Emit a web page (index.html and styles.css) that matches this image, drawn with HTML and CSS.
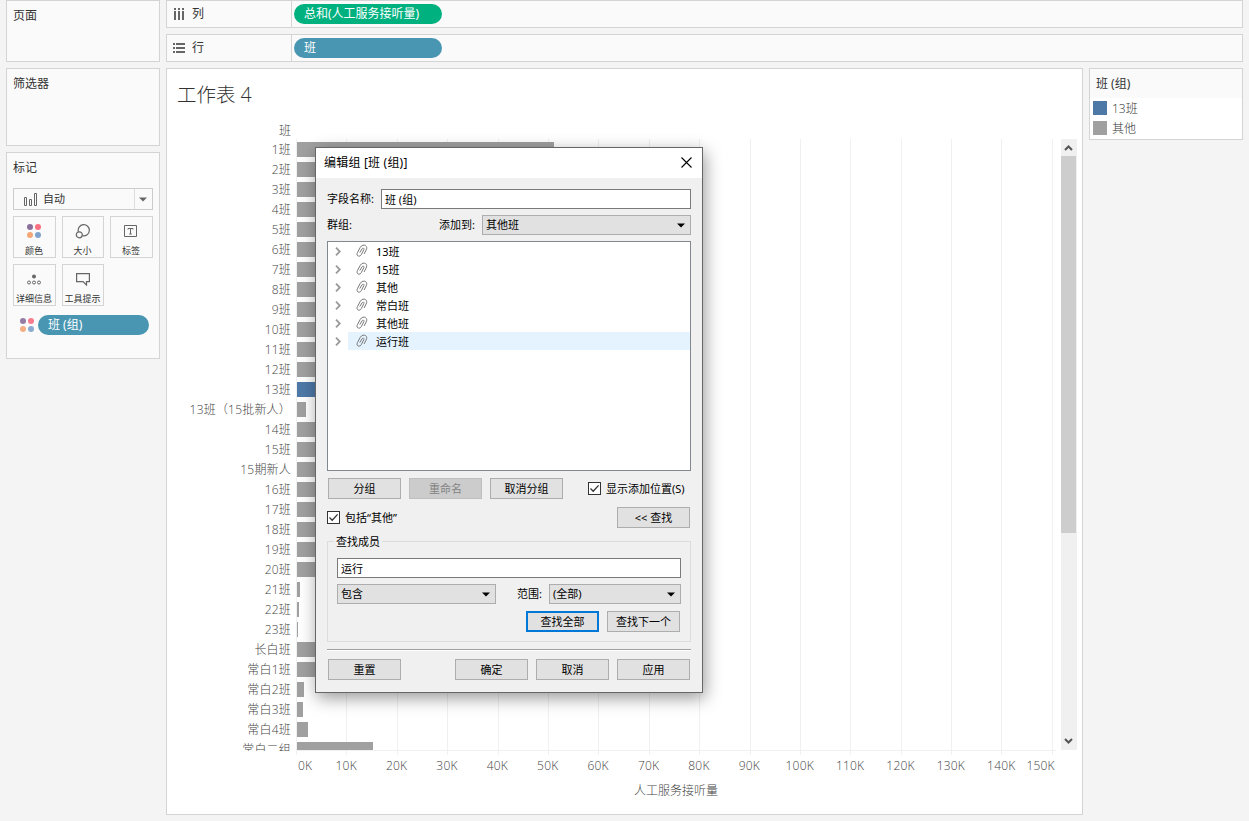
FILE: index.html
```html
<!DOCTYPE html>
<html lang="zh-CN">
<head>
<meta charset="UTF-8" />
<meta name="viewport" content="width=device-width, initial-scale=1" />
<title>工作表 4</title>
<link rel="stylesheet" href="styles.css">
</head>
<body>

<svg class="defs" width="0" height="0">
  <symbol id="clip" viewBox="0 0 12 14">
    <path d="M4 8.200 6.200 4.600c.7-1 2.200-.4 1.700.9L5.300 10.600c-.9 1.900-3.200 2-4 .7-.5-.9-.2-2 .3-3L4.300 3.300C5.600 1 8.200.6 9.700 1.700c1.400 1 1.200 2.800.5 4.200L8.300 9.600" fill="none" stroke="#777" stroke-linecap="round"/>
  </symbol>
  <symbol id="arrow" viewBox="0 0 8 5"><path d="M0 .5h8L4 4.500z"/></symbol>
  <symbol id="chevron" viewBox="0 0 6 9"><path d="M1 .7 4.800 4.500 1 8.300" fill="none" stroke="#999" stroke-width="1.800"/></symbol>
  <symbol id="check" viewBox="0 0 11 11"><path d="M1.500 5.500 4.200 8.200 9.600 2.400" fill="none" stroke="#333" stroke-width="1.300"/></symbol>
  <symbol id="dots" viewBox="0 0 14 14">
    <circle cx="3" cy="3" r="3" fill="#8a6f9b"/><circle cx="11" cy="3" r="3" fill="#fb6f81"/>
    <circle cx="3" cy="11" r="3" fill="#f5a777"/><circle cx="11" cy="11" r="3" fill="#80a3cd"/>
  </symbol>
</svg>

<div class="workspace">
  <div class="sidebar">
    <div class="card pages">页面</div>
    <div class="card filters">筛选器</div>
    <div class="card marks">
      <div class="marks-title">标记</div>
      <div class="mark-type">
        <svg class="bars-icon" width="14" height="13" viewBox="0 0 14 13" fill="none" stroke="#666"><path d="M.5 4.500h2v8h-2zM5.500 6.500h2v6h-2zM10.500.5h2v12h-2z"/></svg>
        <span>自动</span>
        <div class="mark-arrow"><svg width="8" height="5" fill="#666"><use href="#arrow"/></svg></div>
      </div>
      <div class="mark-buttons">
        <div class="mark-btn"><svg width="14" height="14"><use href="#dots"/></svg>颜色</div>
        <div class="mark-btn"><svg width="16" height="16" viewBox="0 0 16 16" fill="none" stroke="#666" stroke-width="1.200"><path d="M3.400 7.800A5.600 5.600 0 1 1 7.500 11.700"/><circle cx="4.300" cy="10.800" r="3"/></svg>大小</div>
        <div class="mark-btn"><svg width="14" height="14" viewBox="0 0 14 14" fill="none" stroke="#666"><path d="M.5 1.500h12v11H.5zM4 5.500V4.500h5v1M6.500 4.500v5.500M5.200 10h2.600"/></svg>标签</div>
        <div class="mark-btn"><svg width="14" height="14" viewBox="0 0 14 14" fill="none" stroke="#666"><circle cx="7" cy="4.500" r="2" fill="#666" stroke="none"/><circle cx="2" cy="10.500" r="1.500"/><circle cx="7" cy="10.500" r="1.500"/><circle cx="12" cy="10.500" r="1.500"/></svg>详细信息</div>
        <div class="mark-btn"><svg width="14" height="14" viewBox="0 0 14 14" fill="none" stroke="#666" stroke-width="1.200"><path d="M.6 1.600h12.800v8H10.500v3.400L7 9.600H.6z"/></svg>工具提示</div>
      </div>
      <div class="mark-field">
        <svg width="14" height="14" opacity=".9"><use href="#dots"/></svg>
        <div class="pill">班 (组)</div>
      </div>
    </div>
  </div>

  <div class="main">
    <div class="shelf">
      <div class="shelf-label">
        <svg width="12" height="12" viewBox="0 0 12 12" fill="#666"><path d="M1 0h2v2H1zM5 0h2v2H5zM9 0h2v2H9zM1 3h2v9H1zM5 3h2v9H5zM9 3h2v9H9z"/></svg>列
      </div>
      <div class="pill green">总和(人工服务接听量)</div>
    </div>
    <div class="shelf">
      <div class="shelf-label">
        <svg width="12" height="12" viewBox="0 0 12 12" fill="#666"><path d="M0 1h2v2H0zM0 5h2v2H0zM0 9h2v2H0zM3 1h9v2H3zM3 5h9v2H3zM3 9h9v2H3z"/></svg>行
      </div>
      <div class="pill">班</div>
    </div>

    <div class="content">
      <div class="sheet">
        <div class="sheet-title">工作表 4</div>
        <div class="row-header">班</div>
        <div class="chart">
          <div class="labels" id="labels"></div>
          <div class="plot">
            <div class="gridlines" id="gridlines"></div>
            <div class="bars" id="bars"></div>
          </div>
          <div class="scrollbar">
            <svg width="9" height="6" viewBox="0 0 9 6" fill="none" stroke="#555" stroke-width="2"><path d="M1 5 4.500 1.500 8 5"/></svg>
            <div class="thumb"></div>
            <svg width="9" height="6" viewBox="0 0 9 6" fill="none" stroke="#555" stroke-width="2"><path d="M1 1 4.500 4.500 8 1"/></svg>
          </div>
        </div>
        <div class="axis" id="axis"></div>
        <div class="axis-title">人工服务接听量</div>
      </div>

      <div class="legend">
        <div class="legend-title">班 (组)</div>
        <div class="legend-item"><i class="swatch blue"></i><span>13班</span></div>
        <div class="legend-item"><i class="swatch"></i><span>其他</span></div>
      </div>
    </div>
  </div>
</div>

<div class="dialog" role="dialog">
  <div class="dialog-title">
    <span>编辑组 [班 (组)]</span>
    <svg width="11" height="11" viewBox="0 0 11 11" stroke="#000" stroke-width="1.100"><path d="M.5.5l10 10M10.500.5l-10 10"/></svg>
  </div>
  <div class="dialog-body">
    <div class="field-row">
      <label class="name-label">字段名称:</label>
      <div class="text-input">班 (组)</div>
    </div>
    <div class="field-row group-row">
      <label>群组:</label>
      <label class="add-label">添加到:</label>
      <div class="select add-select">其他班<svg width="8" height="5"><use href="#arrow"/></svg></div>
    </div>
    <div class="group-list" id="groupList"></div>
    <div class="button-row">
      <div class="btn">分组</div>
      <div class="btn disabled">重命名</div>
      <div class="btn">取消分组</div>
      <div class="check show-add"><i><svg width="11" height="11"><use href="#check"/></svg></i>显示添加位置(S)</div>
    </div>
    <div class="button-row include-row">
      <div class="check"><i><svg width="11" height="11"><use href="#check"/></svg></i>包括“其他”</div>
      <div class="btn push">&lt;&lt; 查找</div>
    </div>
    <div class="find-box">
      <div class="find-legend"><span>查找成员</span></div>
      <div class="text-input find-input">运行</div>
      <div class="field-row find-row">
        <div class="select match-select">包含<svg width="8" height="5"><use href="#arrow"/></svg></div>
        <label class="range-label">范围:</label>
        <div class="select range-select">(全部)<svg width="8" height="5"><use href="#arrow"/></svg></div>
      </div>
      <div class="find-buttons">
        <div class="btn focused">查找全部</div>
        <div class="btn">查找下一个</div>
      </div>
    </div>
    <div class="divider"></div>
    <div class="button-row footer">
      <div class="btn">重置</div>
      <div class="btn push">确定</div>
      <div class="btn">取消</div>
      <div class="btn">应用</div>
    </div>
  </div>
</div>

<script>
  // [label, bar width in px]
  const ROWS = [
    ['1班', 257], ['2班', 240], ['3班', 236], ['4班', 230], ['5班', 228], ['6班', 240],
    ['7班', 232], ['8班', 226], ['9班', 235], ['10班', 220], ['11班', 224], ['12班', 218],
    ['13班', 210], ['13班（15批新人）', 9], ['14班', 205], ['15班', 200], ['15期新人', 60],
    ['16班', 190], ['17班', 186], ['18班', 180], ['19班', 170], ['20班', 150], ['21班', 3],
    ['22班', 2], ['23班', 1], ['长白班', 90], ['常白1班', 80], ['常白2班', 7],
    ['常白3班', 6], ['常白4班', 11], ['常白二组', 76]
  ];
  const GROUPS = ['13班', '15班', '其他', '常白班', '其他班', '运行班'];

  document.getElementById('labels').innerHTML = ROWS.map(r => `<div>${r[0]}</div>`).join('');
  document.getElementById('bars').innerHTML = ROWS.map(r =>
    `<div class="bar${r[0] === '13班' ? ' blue' : ''}" style="width:${r[1]}px"></div>`).join('');

  let lines = '';
  let ticks = '';
  for (let i = 0; i <= 15; i++) {
    lines += '<div></div>';
    ticks += `<span>${i * 10}K</span>`;
  }
  document.getElementById('gridlines').innerHTML = lines;
  document.getElementById('axis').innerHTML = ticks;

  document.getElementById('groupList').innerHTML = GROUPS.map(g => `
    <div class="group-item">
      <svg class="chevron" width="6" height="9"><use href="#chevron"/></svg>
      <div class="group-name${g === '运行班' ? ' selected' : ''}"><svg width="12" height="14"><use href="#clip"/></svg><span>${g}</span></div>
    </div>`).join('');
</script>

</body>
</html>
```
FILE: styles.css
```css
* {
  box-sizing: border-box;
}
body {
  margin: 0;
  height: 821px;
  overflow: hidden;
  background: #f4f4f4;
  font-family: "Noto Sans", "Noto Sans CJK SC", sans-serif;
  font-size: 12px;
  line-height: 16px;
  color: #333;
  white-space: nowrap;
}
svg {
  display: block;
  flex: none;
}
.defs {
  position: absolute;
}
.workspace {
  display: flex;
  gap: 6px;
  padding: 0 6px;
}
.sidebar {
  display: flex;
  flex-direction: column;
  gap: 6px;
  width: 154px;
}
.card {
  border: 1px solid #d4d4d4;
  background: #fafafa;
  padding: 7px 6px;
}
.pages {
  height: 62px;
}
.filters {
  height: 78px;
}
.marks {
  height: 207px;
}
.mark-type {
  display: flex;
  align-items: center;
  height: 22px;
  margin-top: 12px;
  padding-left: 10px;
  border: 1px solid #ccc;
  font-size: 11px;
}
.mark-type span {
  margin-left: 5px;
}
.mark-arrow {
  display: flex;
  align-items: center;
  justify-content: center;
  width: 18px;
  height: 20px;
  margin-left: auto;
  padding-right: 1px;
  border-left: 1px solid #ddd;
}
.mark-buttons {
  display: grid;
  grid-template-columns: 43px 42px 43px;
  gap: 6px;
  margin-top: 6px;
}
.mark-btn {
  display: flex;
  flex-direction: column;
  align-items: center;
  justify-content: space-between;
  height: 42px;
  padding: 7px 1px 0 0;
  border: 1px solid #d4d4d4;
  font-size: 9px;
  line-height: 13px;
}
.mark-field {
  display: flex;
  align-items: center;
  gap: 4px;
  margin: 9px 0 0 7px;
}
.mark-field .pill {
  width: 111px;
}
.pill {
  width: 148px;
  height: 20px;
  padding-left: 10px;
  border-radius: 10px;
  background: #4996b2;
  color: #fff;
  line-height: 20px;
}
.pill.green {
  background: #00b180;
}
.main {
  display: flex;
  flex-direction: column;
  gap: 6px;
  width: 1077px;
}
.shelf {
  display: flex;
  align-items: center;
  height: 28px;
  border: 1px solid #d4d4d4;
  background: #fafafa;
}
.shelf-label {
  display: flex;
  align-items: center;
  gap: 7px;
  width: 125px;
  height: 26px;
  padding-left: 6px;
  border-right: 1px solid #d4d4d4;
  margin-right: 2px;
  line-height: 18px;
}
.shelf-label svg {
  margin-top: -1px;
}
.content {
  display: flex;
  align-items: flex-start;
  gap: 6px;
}
.sheet {
  width: 917px;
  height: 747px;
  border: 1px solid #d4d4d4;
  background: #fff;
  color: #444;
  font-family: "Open Sans", "Noto Sans CJK SC", sans-serif;
  font-weight: 300;
}
.sheet-title {
  height: 52px;
  padding: 11px 0 0 10px;
  color: #333;
  font-size: 19.5px;
  line-height: 29px;
}
.row-header {
  width: 124px;
  height: 18px;
  line-height: 20px;
  text-align: right;
}
.chart {
  display: flex;
  height: 616px;
}
.labels {
  width: 124px;
  height: 612px;
  margin-right: 5px;
  overflow: hidden;
  text-align: right;
  letter-spacing: 0.2px;
}
.labels div {
  height: 20px;
  line-height: 22px;
}
.plot {
  display: grid;
  width: 760px;
}
.gridlines,
.bars {
  grid-area: 1 / 1;
}
.gridlines {
  display: flex;
}
.gridlines div {
  flex: none;
  width: 50.4px;
  border-left: 1px solid #f0f0f0;
}
.gridlines div:last-child {
  width: 1px;
}
.bars {
  height: 612px;
  padding-left: 1px;
  overflow: hidden;
  border-bottom: 1px solid #f0f0f0;
}
.bar {
  height: 15px;
  margin: 3px 0 5px;
  background: #a0a0a0;
}
.bar + .bar {
  margin-top: 5px;
}
.blue {
  background: #4e79a7;
}
.scrollbar {
  display: flex;
  flex-direction: column;
  align-items: center;
  width: 16px;
  height: 611px;
  margin-left: 5px;
  padding: 6px 1px 6px 0;
  background: #f0f0f0;
}
.thumb {
  width: 15px;
  height: 377px;
  margin: 5px 0 auto;
  background: #cdcdcd;
}
.axis {
  display: flex;
  width: 758px;
  margin: 2px 0 0 129px;
  line-height: 18px;
  letter-spacing: 0.2px;
}
.axis span {
  flex: none;
  width: 50.4px;
  text-align: center;
}
.axis span:first-child {
  width: 25px;
  padding-left: 2px;
  text-align: left;
}
.axis span:last-child {
  width: 27px;
  text-align: right;
}
.axis-title {
  margin: 6px 0 0 129px;
  width: 760px;
  line-height: 19px;
  text-align: center;
}
.legend {
  width: 154px;
  height: 72px;
  border: 1px solid #d4d4d4;
  background: #fff;
}
.legend-title {
  height: 29px;
  padding: 7px 6px;
  background: #fafafa;
}
.legend-item {
  display: flex;
  align-items: center;
  gap: 5px;
  height: 20px;
  padding-left: 3px;
  font-family: "Open Sans", "Noto Sans CJK SC", sans-serif;
  font-weight: 300;
}
.legend-item span {
  padding-top: 2px;
}
.swatch {
  width: 14px;
  height: 14px;
  background: #a0a0a0;
}
.swatch.blue {
  background: #4e79a7;
}

/* edit group dialog */
.dialog {
  position: absolute;
  left: 315px;
  top: 147px;
  width: 388px;
  height: 546px;
  border: 1px solid #666;
  background: #f0f0f0;
  color: #000;
  font-size: 11px;
  box-shadow: 2px 5px 16px rgba(0, 0, 0, 0.4);
}
.dialog-title {
  display: flex;
  align-items: center;
  justify-content: space-between;
  height: 30px;
  padding: 0 10px 1px 8px;
  background: #fff;
  font-size: 12px;
  letter-spacing: 0.2px;
}
.dialog-body {
  padding: 11px 11px 0;
}
.field-row {
  display: flex;
  align-items: center;
  height: 20px;
}
.name-label {
  width: 54px;
}
.text-input {
  flex: 1;
  height: 20px;
  padding-left: 3px;
  border: 1px solid #7a7a7a;
  background: #fff;
  line-height: 20px;
}
.group-row {
  margin-top: 6px;
}
.add-label {
  margin-left: auto;
  margin-right: 7px;
}
.select {
  display: flex;
  align-items: center;
  justify-content: space-between;
  height: 20px;
  padding: 0 5px 0 3px;
  border: 1px solid #adadad;
  background: #e1e1e1;
}
.add-select {
  width: 209px;
}
.group-list {
  height: 230px;
  margin-top: 6px;
  border: 1px solid #828790;
  background: #fff;
}
.group-item {
  display: flex;
  align-items: center;
  height: 18px;
}
.chevron {
  margin: 0 7px;
}
.group-name {
  display: flex;
  align-items: center;
  flex: 1;
  gap: 8px;
  height: 18px;
  padding-left: 8px;
}
.group-name span {
  padding-top: 2px;
}
.selected {
  background: #e5f3ff;
}
.button-row {
  display: flex;
  align-items: center;
  gap: 8px;
  height: 21px;
  margin-top: 7px;
  padding: 0 1px;
}
.btn {
  width: 73px;
  height: 21px;
  border: 1px solid #adadad;
  background: #e1e1e1;
  line-height: 20px;
  text-align: center;
}
.disabled {
  border-color: #bfbfbf;
  background: #ccc;
  color: #838383;
}
.focused {
  border: 2px solid #0078d7;
  line-height: 18px;
}
.push {
  margin-left: auto;
}
.check {
  display: flex;
  align-items: center;
  gap: 5px;
}
.check i {
  width: 13px;
  height: 13px;
  border: 1px solid #333;
  background: #fff;
}
.show-add {
  margin-left: 17px;
}
.include-row {
  margin-top: 8px;
  padding-left: 0;
}
.find-box {
  height: 101px;
  margin-top: 13px;
  padding: 0 9px;
  border: 1px solid #dcdcdc;
}
.find-legend {
  height: 16px;
  margin: -8px 0 8px -3px;
}
.find-legend span {
  display: inline-block;
  padding: 0 2px;
  background: #f0f0f0;
}
.find-row {
  margin-top: 6px;
}
.match-select {
  width: 159px;
}
.range-label {
  margin: 0 7px 0 auto;
}
.range-select {
  width: 132px;
}
.find-buttons {
  display: flex;
  justify-content: flex-end;
  gap: 8px;
  margin: 7px 1px 0 0;
}
.divider {
  height: 2px;
  margin-top: 7px;
  border-top: 1px solid #a0a0a0;
  background: #fff;
}
.footer {
  margin-top: 8px;
}
```
